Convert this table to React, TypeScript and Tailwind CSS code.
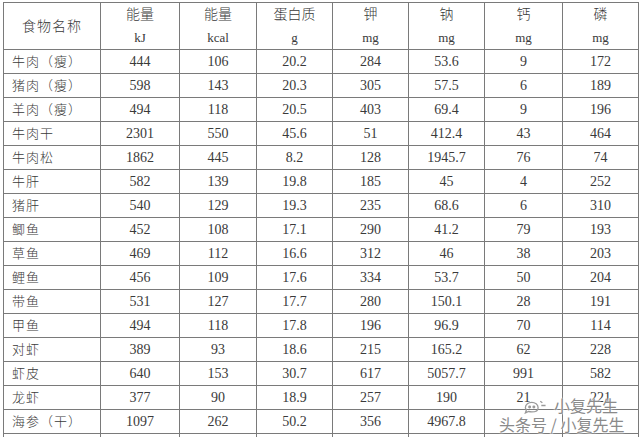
const rows: string[][] = [
  ["牛肉（瘦）", "444", "106", "20.2", "284", "53.6", "9", "172"],
  ["猪肉（瘦）", "598", "143", "20.3", "305", "57.5", "6", "189"],
  ["羊肉（瘦）", "494", "118", "20.5", "403", "69.4", "9", "196"],
  ["牛肉干", "2301", "550", "45.6", "51", "412.4", "43", "464"],
  ["牛肉松", "1862", "445", "8.2", "128", "1945.7", "76", "74"],
  ["牛肝", "582", "139", "19.8", "185", "45", "4", "252"],
  ["猪肝", "540", "129", "19.3", "235", "68.6", "6", "310"],
  ["鲫鱼", "452", "108", "17.1", "290", "41.2", "79", "193"],
  ["草鱼", "469", "112", "16.6", "312", "46", "38", "203"],
  ["鲤鱼", "456", "109", "17.6", "334", "53.7", "50", "204"],
  ["带鱼", "531", "127", "17.7", "280", "150.1", "28", "191"],
  ["甲鱼", "494", "118", "17.8", "196", "96.9", "70", "114"],
  ["对虾", "389", "93", "18.6", "215", "165.2", "62", "228"],
  ["虾皮", "640", "153", "30.7", "617", "5057.7", "991", "582"],
  ["龙虾", "377", "90", "18.9", "257", "190", "21", "221"],
  ["海参（干）", "1097", "262", "50.2", "356", "4967.8", "", ""],
  ["", "", "", "", "", "", "", ""],
];

const heads: [string, string][] = [
  ["能量", "kJ"],
  ["能量", "kcal"],
  ["蛋白质", "g"],
  ["钾", "mg"],
  ["钠", "mg"],
  ["钙", "mg"],
  ["磷", "mg"],
];

const widths = ["w-[97px]", "w-[79px]", "w-[77px]", "w-[76px]", "w-[76px]", "w-[76px]", "w-[78px]", "w-[76px]"];

export default function App() {
  return (
    <div className="relative w-[640px] h-[437px] overflow-hidden bg-white pl-[3px] pt-[2px] text-[#3a3a3a] font-['Liberation_Serif','Noto_Sans_CJK_SC',serif]">
      <table className="table-fixed border-collapse w-[636px]">
        <colgroup>
          {widths.map((w, i) => (
            <col key={i} className={w} />
          ))}
        </colgroup>
        <thead>
          <tr className="h-[47px]">
            <th className="border border-[#7a7a7a] font-light text-[14px] tracking-[1px] text-center">食物名称</th>
            {heads.map(([a, b], i) => (
              <th key={i} className="border border-[#7a7a7a] font-light text-center align-middle">
                <div className="text-[14px] leading-[18px]">{a}</div>
                <div className="text-[13px] leading-[18px] mt-[5px]">{b}</div>
              </th>
            ))}
          </tr>
        </thead>
        <tbody>
          {rows.map((r, i) => (
            <tr key={i} className="h-[24px]">
              {r.map((c, j) => (
                <td
                  key={j}
                  className={
                    j === 0
                      ? "border border-[#7a7a7a] pl-[8px] font-light text-[13px] leading-[22px] tracking-[1px]"
                      : "border border-[#7a7a7a] text-center text-[14px] leading-[22px]"
                  }
                >
                  {c}
                </td>
              ))}
            </tr>
          ))}
        </tbody>
      </table>

      <div className="absolute left-[522px] top-[397px] flex items-center gap-[4px] text-[16px] text-[#8a8a8a] font-['Noto_Sans_CJK_SC',sans-serif] [text-shadow:0_0_2px_#fff,0_0_2px_#fff]">
        <svg width="28" height="17" viewBox="0 0 26 16" fill="none" stroke="#9a9a9a" strokeWidth="1.2">
          <path d="M3 10c0-3 3-5 6-5s6 2 6 5-3 4-6 4c-1 0-2 0-3-.5L3 15l1-3c-.6-.6-1-1.2-1-2z" />
          <circle cx="7" cy="9.5" r="0.8" fill="#9a9a9a" />
          <circle cx="11" cy="9.5" r="0.8" fill="#9a9a9a" />
          <path d="M17 4l2 1.5M18 8h4" />
        </svg>
        <span className="leading-[17px]">小复先生</span>
      </div>
      <div className="absolute left-[499px] top-[415px] text-[16px] leading-[18px] text-[#8a8a8a] font-['Noto_Sans_CJK_SC',sans-serif] [text-shadow:0_0_2px_#fff,0_0_2px_#fff,0_0_1px_#fff]">
        头条号 / 小复先生
      </div>
    </div>
  );
}
